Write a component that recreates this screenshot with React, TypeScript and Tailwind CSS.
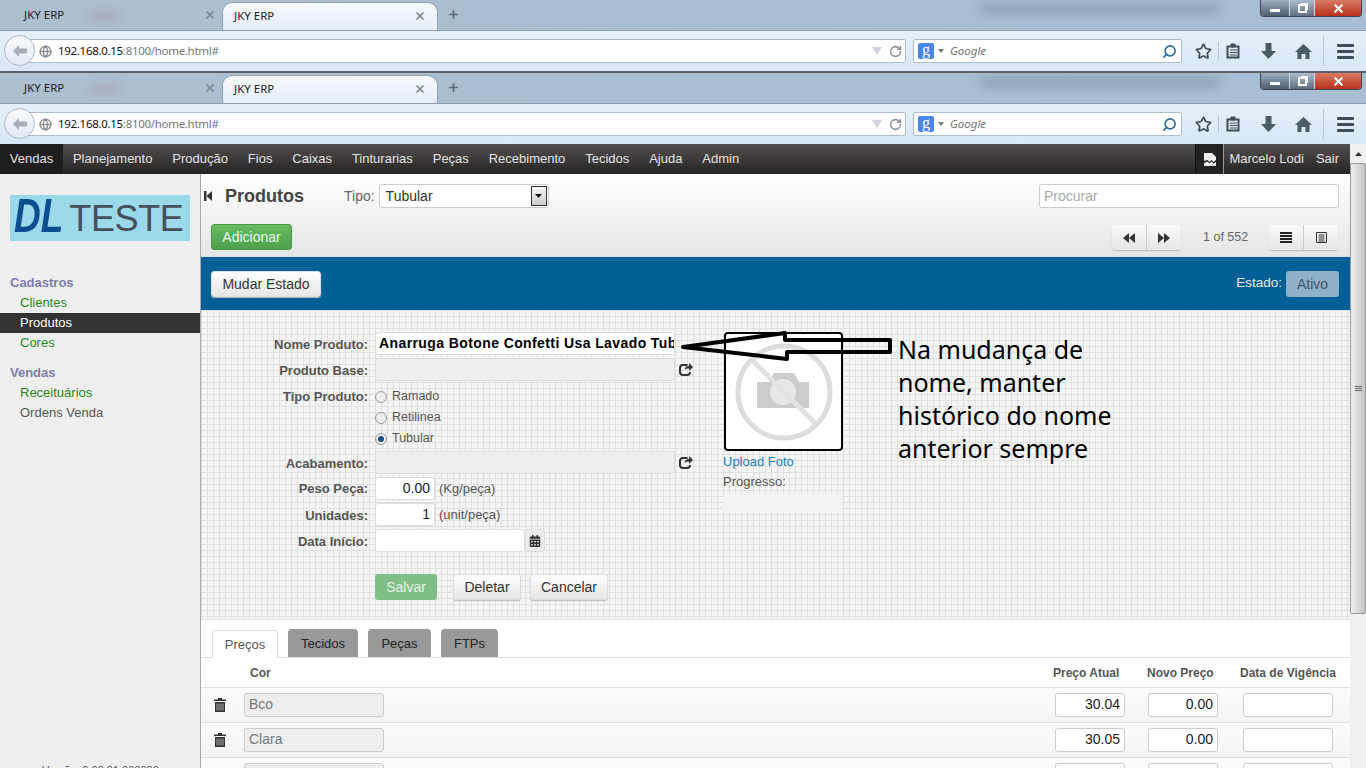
import { Star, RotateCw, Search, X, Plus, Globe } from "lucide-react";
import { FaCalendarAlt } from "react-icons/fa";

const menu = ["Planejamento", "Produção", "Fios", "Caixas", "Tinturarias", "Peças", "Recebimento", "Tecidos", "Ajuda", "Admin"];
const chromeFont = "font-['Noto_Sans',sans-serif]";

function Tab({ active }: { active?: boolean }) {
  return (
    <div className={`relative flex h-[28px] items-center justify-between pb-[2px] ${active ? "w-[216px] rounded-t-[10px] border border-b-0 border-[#8fa3b5] bg-[linear-gradient(#f5f9fd,#e4eef8)] pl-[11px] pr-[11px]" : "w-[222px] pl-[24px] pr-[6px]"}`}>
      <span className={`${chromeFont} text-[11.5px] text-[#222]`}>JKY ERP</span>
      <X size={12} strokeWidth={3.5} className="text-[#7d8791]" />
    </div>
  );
}

function WindowButtons({ height }: { height: string }) {
  return (
    <div className={`absolute right-[4px] top-0 flex w-[102px] overflow-hidden rounded-b-[4px] border border-t-0 border-[#3a4452] ${height}`}>
      <div className="flex w-[28px] items-center justify-center bg-[linear-gradient(#9eb0c2,#4e5d6d)]">
        <div className="mt-[4px] h-[3px] w-[10px] bg-white" />
      </div>
      <div className="flex w-[26px] items-center justify-center border-x border-[#cfd8e0] bg-[linear-gradient(#a9bccd,#5f6e7e)]">
        <div className="h-[9px] w-[9px] border-2 border-white shadow-[2px_-2px_0_-1px_#fff]" />
      </div>
      <div className="flex flex-1 items-center justify-center bg-[linear-gradient(#d97a66,#b8301c)]">
        <X size={13} strokeWidth={4} className="text-white" />
      </div>
    </div>
  );
}

function Toolbar() {
  return (
    <div className="relative flex h-[41px] items-center border-t border-[#8b9cac] bg-[linear-gradient(#e6f0fa,#d8e7f5)] pr-[10px]">
      <div className="absolute left-[4px] top-[4px] z-10 flex h-[31px] w-[31px] items-center justify-center rounded-full border border-[#a9b8c6] bg-[linear-gradient(#f8fbfe,#e2ebf3)]">
        <svg width="16" height="14" viewBox="0 0 16 14"><path d="M1 7 7 1v3.500h8v5H7V13z" fill="#a4afba" /></svg>
      </div>
      <div className="ml-[20px] flex h-[24px] w-[886px] items-center rounded-[2px] border border-[#aebdcb] bg-white pl-[18px] pr-[3px]">
        <Globe size={13} strokeWidth={2.5} className="text-[#8b8f94]" />
        <span className={`${chromeFont} ml-[6px] flex-1 text-[11.5px] tracking-[-0.3px] text-[#111]`}>
          192.168.0.15<span className="text-[#777]">:8100/home.html#</span>
        </span>
        <svg width="10" height="8" viewBox="0 0 10 8" className="mr-[7px]"><path d="M0 0h10L5 8z" fill="#cdd3d8" /></svg>
        <RotateCw size={13} strokeWidth={2.8} className="text-[#8b949c]" />
      </div>
      <div className="ml-[7px] flex h-[24px] w-[269px] items-center rounded-[2px] border border-[#aebdcb] bg-white pl-[4px] pr-[4px]">
        <div className="flex h-[16px] w-[16px] items-center justify-center rounded-[2px] bg-[#4a86e8] pb-[3px] font-['Liberation_Serif',serif] text-[16px] leading-none text-white">g</div>
        <svg width="6" height="4" viewBox="0 0 6 4" className="ml-[4px]"><path d="M0 0h6L3 4z" fill="#777" /></svg>
        <span className={`${chromeFont} ml-[6px] flex-1 text-[11.5px] italic text-[#777]`}>Google</span>
        <Search size={15} strokeWidth={2.6} className="-scale-x-100 text-[#2f6ea5]" />
      </div>
      <Star size={17} strokeWidth={2.4} className="ml-[13px] text-[#3f4c59]" />
      <div className="ml-[6px] h-[18px] w-px bg-[#b9c7d4]" />
      <svg width="14" height="16" viewBox="0 0 14 16" className="ml-[7px]">
        <path d="M1.500 3.500h11v11h-11z" fill="none" stroke="#3f4c59" strokeWidth="2" />
        <path d="M5 1h4v3H5zM4 7h7M4 9.500h7M4 12h7" fill="#3f4c59" stroke="#3f4c59" />
      </svg>
      <svg width="15" height="16" viewBox="0 0 15 16" className="ml-[21px]"><path d="M4.500 0h6v8H15l-7.500 8L0 8h4.500z" fill="#4b5a68" /></svg>
      <svg width="17" height="15" viewBox="0 0 17 15" className="ml-[19px]"><path d="M8.500 0 17 8h-2.500v7H10.500v-5h-4v5H2.500V8H0z" fill="#4b5a68" /></svg>
      <div className="ml-[11px] h-[30px] w-px bg-[#b9c7d4]" />
      <div className="ml-[13px] flex w-[17px] flex-col gap-[3px]">
        <div className="h-[3px] rounded-[1px] bg-[#3f4c59]" />
        <div className="h-[3px] rounded-[1px] bg-[#3f4c59]" />
        <div className="h-[3px] rounded-[1px] bg-[#3f4c59]" />
      </div>
    </div>
  );
}

function Browser({ clip }: { clip: string }) {
  return (
    <div className="relative">
      <div className={`relative flex items-end overflow-hidden bg-[linear-gradient(90deg,#aebfd0,#a9bdd0_50%,#a8bed2)] ${clip}`}>
        {/* borrão do fundo da janela */}
        <div className="absolute left-[980px] top-[3px] h-[12px] w-[240px] bg-[#93a5b7] blur-[5px]" />
        <div className="absolute left-[90px] top-[12px] h-[8px] w-[30px] bg-[#a7a9b8] blur-[4px]" />
        <Tab />
        <Tab active />
        <Plus size={13} strokeWidth={3} className="mb-[9px] ml-[9px] text-[#5b6670]" />
        <WindowButtons height="h-[17px]" />
      </div>
      <Toolbar />
    </div>
  );
}

function Label({ children }: { children: string }) {
  return <div className="w-[174px] pr-[7px] text-right text-[13px] font-bold text-[#555]">{children}</div>;
}

function FormInput({ w, value, disabled, bold }: { w: string; value?: string; disabled?: boolean; bold?: boolean }) {
  return (
    <div className={`flex h-[23px] items-center rounded-[3px] border border-[#ddd] text-[14px] text-[#222] ${w} ${disabled ? "bg-[#eee]" : "bg-white"} ${bold ? "pl-[3px] font-bold tracking-[0.4px] text-black" : "justify-end px-[4px]"} overflow-hidden whitespace-nowrap`}>
      {value}
    </div>
  );
}

function Radio({ label, on }: { label: string; on?: boolean }) {
  return (
    <div className="flex h-[21px] items-center gap-[5px] text-[12.5px] text-[#555]">
      <span className="flex h-[12px] w-[12px] items-center justify-center rounded-full border border-[#999] bg-[#eee]">
        {on && <span className="h-[6px] w-[6px] rounded-full bg-[#17527f]" />}
      </span>
      {label}
    </div>
  );
}

function LinkIcon() {
  return (
    <svg width="14" height="14" viewBox="0 0 14 14" className="ml-[4px]">
      <path d="M8.500 3H4a3 3 0 0 0-3 3v4a3 3 0 0 0 3 3h4a3 3 0 0 0 3-3" fill="none" stroke="#333" strokeWidth="2" />
      <path d="M5.500 8c0-2.500 2-4 4.500-4V1l4 4-4 4V6.500C8 6.500 6.500 6.500 5.500 8z" fill="#333" />
    </svg>
  );
}

function TrashIcon() {
  return (
    <svg width="12" height="14" viewBox="0 0 12 14" className="ml-[13px]">
      <path d="M4 0h4v1.500h4V3H0V1.500h4z" fill="#333" />
      <path d="M1 4h10v10H1z" fill="#333" />
      <path d="M3 5.500v7M5 5.500v7M7 5.500v7M9 5.500v7" stroke="#bbb" strokeWidth="0.9" />
    </svg>
  );
}

function Btn({ children, cls }: { children: string; cls?: string }) {
  return (
    <div className={`flex h-[26px] items-center justify-center rounded-[3px] border border-[#ddd] bg-[linear-gradient(#fff,#e6e6e6)] text-[14px] text-[#333] shadow-[0_1px_1px_#bbb] ${cls}`}>
      {children}
    </div>
  );
}

function PriceRow({ name, price }: { name: string; price: string }) {
  return (
    <div className="flex h-[35px] items-center border-b border-[#ddd] bg-[linear-gradient(#fcfcfc,#f4f4f4)] pb-[1px]">
      <TrashIcon />
      <div className="ml-[18px] flex h-[24px] w-[140px] items-center rounded-[3px] border border-[#ccc] bg-[#eee] px-[4px] text-[14px] text-[#777]">{name}</div>
      <div className="ml-[671px] flex h-[24px] w-[70px] items-center justify-end rounded-[3px] border border-[#ccc] bg-white px-[4px] text-[14px] text-[#222]">{price}</div>
      <div className="ml-[23px] flex h-[24px] w-[70px] items-center justify-end rounded-[3px] border border-[#ccc] bg-white px-[4px] text-[14px] text-[#222]">0.00</div>
      <div className="ml-[25px] h-[24px] w-[90px] rounded-[3px] border border-[#ccc] bg-white" />
    </div>
  );
}

export default function App() {
  return (
    <div className="h-[768px] w-[1366px] overflow-hidden font-['Liberation_Sans',sans-serif]">
      <div className="h-[71px] overflow-hidden">
        <Browser clip="h-[30px]" />
      </div>
      <div className="h-[2px] bg-[#5c6064]" />
      <Browser clip="h-[30px]" />

      <div className="relative flex h-[624px]">
        <div className="flex w-[1350px] flex-col">
          {/* top menu */}
          <div className="flex h-[30px] items-center bg-[linear-gradient(#544f4e,#262424)] text-[13px] text-[#e4e4e4]">
            <div className="flex h-full w-[63px] items-center justify-center bg-[#1f1d1d]">Vendas</div>
            {menu.map((m) => (
              <div key={m} className="px-[9.95px]">{m}</div>
            ))}
            <div className="ml-auto flex h-full w-[29px] items-center justify-center border-x border-l-[#111] border-r-[#999] bg-[#222]">
              <svg width="12" height="13" viewBox="0 0 12 13"><path d="M0 0h8l4 4v3l-2.500 2-2-2-2 2-2-2L0 8zM0 10l3.500-1.500 2 2 2-2 2 2L12 9v4H0z" fill="#eee" /></svg>
            </div>
            <div className="ml-[5px]">Marcelo Lodi</div>
            <div className="ml-[12px] mr-[11px]">Sair</div>
          </div>

          <div className="flex min-h-0 flex-1">
            {/* sidebar */}
            <div className="relative h-full w-[201px] shrink-0 border-r border-[#aaa] bg-[#f0eff0] text-[13px]">
              <div className="ml-[10px] mt-[21px] flex h-[46px] w-[180px] items-center bg-[#9bd8ea] pl-[4px]">
                <span className="mb-[5px] inline-block origin-center scale-y-[1.3] text-[37px] font-bold italic leading-none text-[#0e4c90]">DL</span>
                <span className="ml-[6px] mt-[2px] text-[36px] leading-none tracking-[-0.4px] text-[#46505a]">TESTE</span>
              </div>
              <div className="mt-[32px] pl-[10px] font-bold leading-[20px] text-[#7d7dab]">Cadastros</div>
              <div className="pl-[20px] leading-[20px] text-[#1e8a1e]">Clientes</div>
              <div className="bg-[#333] pl-[20px] leading-[20px] text-white">Produtos</div>
              <div className="pl-[20px] leading-[20px] text-[#1e8a1e]">Cores</div>
              <div className="mt-[10px] pl-[10px] font-bold leading-[20px] text-[#7d7dab]">Vendas</div>
              <div className="pl-[20px] leading-[20px] text-[#1e8a1e]">Receituários</div>
              <div className="pl-[20px] leading-[20px] text-[#555]">Ordens Venda</div>
              <div className="absolute left-[42px] top-[589px] whitespace-nowrap text-[11px] leading-[14px] text-[#555]">Versão: 0.00.01.000000</div>
            </div>

            {/* main */}
            <div className="flex min-w-0 flex-1 flex-col">
              {/* header */}
              <div className="h-[83px] border-b border-[#ddd] bg-[linear-gradient(#fff,#e6e6e6)] pr-[11px]">
                <div className="mb-[16px] mt-[10px] flex h-[24px] items-center">
                  <svg width="8" height="10" viewBox="0 0 8 10" className="ml-[3px]"><path d="M0 0h2.500v10H0zM8 0v10L2.500 5z" fill="#333" /></svg>
                  <div className="ml-[13px] text-[18px] font-bold text-[#444]">Produtos</div>
                  <div className="ml-[40px] text-[14px] text-[#666]">Tipo:</div>
                  <div className="ml-[4px] flex h-[24px] w-[170px] items-center justify-between rounded-[3px] border border-[#ccc] bg-white pl-[6px] pr-[1px] text-[14px] text-[#333]">
                    Tubular
                    <div className="flex h-[20px] w-[16px] items-center justify-center border border-[#333] bg-[linear-gradient(#f6f6f6,#ccc)]">
                      <svg width="7" height="4" viewBox="0 0 7 4"><path d="M0 0h7L3.500 4z" fill="#111" /></svg>
                    </div>
                  </div>
                  <div className="ml-auto flex h-[24px] w-[300px] items-center rounded-[3px] border border-[#ccc] bg-white px-[4px] text-[14px] text-[#aaa]">Procurar</div>
                </div>
                <div className="flex h-[27px] items-center pl-[10px]">
                  <div className="flex h-[26px] w-[81px] items-center justify-center self-start rounded-[3px] border border-[#4a9a4a] bg-[linear-gradient(#66bb5f,#4ea04d)] text-[14px] text-[#e8f5e8]">Adicionar</div>
                  <div className="ml-auto flex h-[25px] w-[69px] rounded-[3px] bg-[linear-gradient(#fafafa,#e6e6e6)] shadow-[0_1px_1px_#bbb]">
                    <div className="flex flex-1 items-center justify-center border-r border-[#ccc]">
                      <svg width="12" height="10" viewBox="0 0 12 10"><path d="M6 0v10L0 5zM12 0v10L6 5z" fill="#333" /></svg>
                    </div>
                    <div className="flex flex-1 items-center justify-center">
                      <svg width="12" height="10" viewBox="0 0 12 10"><path d="M0 0v10l6-5zM6 0v10l6-5z" fill="#333" /></svg>
                    </div>
                  </div>
                  <div className="ml-[22px] w-[45px] whitespace-nowrap text-[12.5px] text-[#666]">1 of 552</div>
                  <div className="ml-[21px] mr-[1px] flex h-[25px] w-[69px] rounded-[3px] bg-[linear-gradient(#fafafa,#e6e6e6)] shadow-[0_1px_1px_#bbb]">
                    <div className="flex flex-1 items-center justify-center border-r border-[#ccc]">
                      <div className="flex w-[12px] flex-col gap-[1px]">
                        <div className="h-[2px] bg-[#222]" />
                        <div className="h-[2px] bg-[#222]" />
                        <div className="h-[2px] bg-[#222]" />
                        <div className="h-[2px] bg-[#222]" />
                      </div>
                    </div>
                    <div className="flex flex-1 items-center justify-center">
                      <svg width="11" height="11" viewBox="0 0 11 11"><path d="M.5.500h10v10H.5zM2.500 3h6M2.500 5h6M2.500 7h6M2.500 9h6" fill="none" stroke="#333" /></svg>
                    </div>
                  </div>
                </div>
              </div>

              {/* blue state bar */}
              <div className="flex h-[53px] items-center justify-between bg-[#005f94] pl-[10px] pr-[11px] pt-[1px]">
                <Btn cls="w-[110px]">Mudar Estado</Btn>
                <div className="flex items-center gap-[4px]">
                  <span className="mb-[2px] text-[13.5px] text-[#e6eef4]">Estado:</span>
                  <div className="flex h-[26px] w-[53px] items-center justify-center rounded-[3px] bg-[#8eb0c9] text-[14px] text-[#3c5468]">Ativo</div>
                </div>
              </div>

              {/* form */}
              <div className="flex h-[309px] bg-[#f6f6f6] bg-[linear-gradient(#e0e0e0_1px,transparent_1px),linear-gradient(90deg,#e0e0e0_1px,transparent_1px)] bg-[size:6px_6px] pt-[22px]">
                <div className="w-[523px]">
                  <div className="flex h-[26px] items-start"><div className="pt-[3px]"><Label>Nome Produto:</Label></div><FormInput w="w-[300px]" value="Anarruga Botone Confetti Usa Lavado Tubular" bold /></div>
                  <div className="flex h-[26px] items-start"><div className="pt-[3px]"><Label>Produto Base:</Label></div><FormInput w="w-[300px]" disabled /><div className="pt-[4px]"><LinkIcon /></div></div>
                  <div className="flex h-[67px] items-start">
                    <div className="pt-[3px]"><Label>Tipo Produto:</Label></div>
                    <div className="mt-[2px] shrink-0"><Radio label="Ramado" /><Radio label="Retilinea" /><Radio label="Tubular" on /></div>
                  </div>
                  <div className="flex h-[26px] items-start"><div className="pt-[3px]"><Label>Acabamento:</Label></div><FormInput w="w-[300px]" disabled /><div className="pt-[4px]"><LinkIcon /></div></div>
                  <div className="flex h-[26px] items-start"><div className="pt-[2px]"><Label>Peso Peça:</Label></div><FormInput w="w-[60px]" value="0.00" /><span className="ml-[4px] pt-[2px] text-[13px] text-[#555]">(Kg/peça)</span></div>
                  <div className="flex h-[26px] items-start"><div className="pt-[3px]"><Label>Unidades:</Label></div><FormInput w="w-[60px]" value="1" /><span className="ml-[4px] pt-[2px] text-[13px] text-[#555]">(unit/peça)</span></div>
                  <div className="flex h-[45px] items-start">
                    <div className="pt-[3px]"><Label>Data Início:</Label></div>
                    <FormInput w="w-[150px]" />
                    <div className="flex h-[23px] w-[20px] items-center justify-center rounded-r-[3px] border border-[#ddd] bg-[#eee]"><FaCalendarAlt size={12} className="text-[#333]" /></div>
                  </div>
                  <div className="flex pl-[174px]">
                    <div className="flex h-[26px] w-[62px] items-center justify-center rounded-[3px] bg-[#7fbf86] text-[14px] text-[#e6f3e6]">Salvar</div>
                    <Btn cls="ml-[16px] w-[68px]">Deletar</Btn>
                    <Btn cls="ml-[9px] w-[78px]">Cancelar</Btn>
                  </div>
                </div>
                <div className="w-[120px]">
                  <div className="flex h-[119px] w-[119px] items-center justify-center rounded-[4px] border-2 border-black bg-white">
                    <svg width="100" height="100" viewBox="0 0 100 100">
                      <circle cx="50" cy="50" r="46" fill="none" stroke="#ddd" strokeWidth="5" />
                      <path d="M23 40h12l5-9h20l5 9h10v26H23z" fill="#ccc" />
                      <circle cx="49" cy="50" r="13" fill="#e8e8e8" />
                      <path d="M18 18 82 82" stroke="#e2e2e2" strokeWidth="5" />
                    </svg>
                  </div>
                  <div className="-ml-[1px] mt-[3px] text-[13px] leading-[16px] text-[#1f80b8]">Upload Foto</div>
                  <div className="-ml-[1px] mt-[4px] text-[13px] leading-[16px] text-[#555]">Progresso:</div>
                  <div className="-ml-[1px] mt-[3px] h-[19px] w-[119px] rounded-[3px] bg-[#f3f3f3]" />
                </div>
              </div>

              {/* tabs + table */}
              <div className="flex-1 overflow-hidden border-t border-[#e4e4e4] bg-white">
                <div className="flex h-[38px] items-end gap-[10px] border-b border-[#ddd] pl-[11px] text-[13px]">
                  <div className="-mb-px flex h-[28px] w-[66px] items-center justify-center rounded-t-[4px] border border-b-0 border-[#ddd] bg-white pt-[1px] text-[#555]">Preços</div>
                  <div className="flex h-[28px] w-[70px] items-center justify-center rounded-t-[4px] bg-[#999] pt-[1px] text-[#222]">Tecidos</div>
                  <div className="flex h-[28px] w-[63px] items-center justify-center rounded-t-[4px] bg-[#999] pt-[1px] text-[#222]">Peças</div>
                  <div className="flex h-[28px] w-[57px] items-center justify-center rounded-t-[4px] bg-[#999] pt-[1px] text-[#222]">FTPs</div>
                </div>
                <div className="flex h-[30px] items-center border-b border-[#ddd] text-[12px] font-bold text-[#555]">
                  <div className="ml-[49px] w-[803px]">Cor</div>
                  <div className="w-[94px]">Preço Atual</div>
                  <div className="w-[93px]">Novo Preço</div>
                  <div>Data de Vigência</div>
                </div>
                <PriceRow name="Bco" price="30.04" />
                <PriceRow name="Clara" price="30.05" />
                <PriceRow name="" price="" />
              </div>
            </div>
          </div>
        </div>

        {/* scrollbar */}
        <div className="flex w-[16px] flex-col bg-[#f0f0f0]">
          <div className="flex h-[19px] items-center justify-center">
            <svg width="7" height="4" viewBox="0 0 7 4"><path d="M3.500 0 7 4H0z" fill="#333" /></svg>
          </div>
          <div className="flex h-[451px] items-center justify-center rounded-[2px] border border-[#999] bg-[linear-gradient(90deg,#eee,#c4c4c4)]">
            <div className="flex w-[7px] flex-col gap-[1px]">
              <div className="h-px bg-[#666]" />
              <div className="h-px bg-[#666]" />
              <div className="h-px bg-[#666]" />
            </div>
          </div>
        </div>

        {/* anotação desenhada sobre a tela */}
        <svg width="220" height="40" viewBox="0 0 220 40" className="absolute left-[675px] top-[184px]">
          <path d="M8 19 110 5v7h105v12H112v7z" fill="none" stroke="#000" strokeWidth="4" strokeLinejoin="round" />
        </svg>
        <div className="absolute left-[898px] top-[189px] w-[240px] font-['Noto_Sans',sans-serif] text-[25px] leading-[33px] text-black">
          Na mudança de nome, manter histórico do nome anterior sempre
        </div>
      </div>
    </div>
  );
}
